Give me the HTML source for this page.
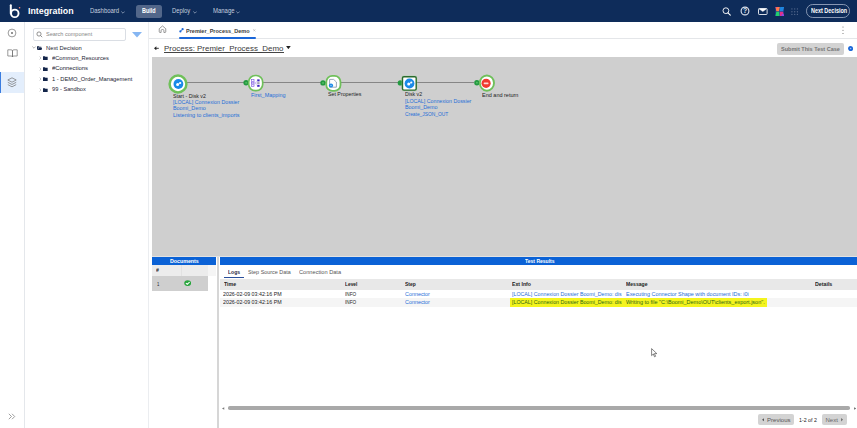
<!DOCTYPE html>
<html><head><meta charset="utf-8">
<style>
*{box-sizing:border-box;margin:0;padding:0}
html,body{width:857px;height:428px;overflow:hidden;background:#fff;font-family:"Liberation Sans",sans-serif;color:#222}
.abs{position:absolute}
.tx{position:absolute;white-space:nowrap;transform-origin:0 50%}
</style></head><body>

<!-- NAV -->
<div class="abs" style="left:0;top:0;width:857px;height:21.5px;background:#0e2c5a"></div>
<svg class="abs" style="left:9px;top:3px" width="13" height="16" viewBox="0 0 13 16">
  <path d="M1.8 2.2 V10.5" stroke="#fff" stroke-width="2" fill="none" stroke-linecap="round"/>
  <circle cx="5.8" cy="10.4" r="3.75" stroke="#fff" stroke-width="1.9" fill="none"/>
  <circle cx="10.6" cy="4.7" r="0.8" fill="#ff8a7a"/>
</svg>
<div class="abs" style="left:135.5px;top:4.6px;width:26px;height:13.2px;border-radius:2.5px;background:#52678a"></div>
<!-- nav chevrons -->
<svg class="abs" style="left:121px;top:10.5px" width="4" height="3" viewBox="0 0 4 3"><path d="M0.3 0.5 L2 2.2 L3.7 0.5" stroke="#c5cfdf" stroke-width="0.6" fill="none"/></svg>
<svg class="abs" style="left:192.8px;top:10.5px" width="4" height="3" viewBox="0 0 4 3"><path d="M0.3 0.5 L2 2.2 L3.7 0.5" stroke="#c5cfdf" stroke-width="0.6" fill="none"/></svg>
<svg class="abs" style="left:236.2px;top:10.5px" width="4" height="3" viewBox="0 0 4 3"><path d="M0.3 0.5 L2 2.2 L3.7 0.5" stroke="#c5cfdf" stroke-width="0.6" fill="none"/></svg>
<!-- right icons -->
<svg class="abs" style="left:721px;top:6px" width="11" height="11" viewBox="0 0 11 11"><circle cx="4.9" cy="4.7" r="2.9" stroke="#fff" stroke-width="0.9" fill="none"/><path d="M7 6.9 L9.3 9.2" stroke="#fff" stroke-width="1.1" stroke-linecap="round"/></svg>
<svg class="abs" style="left:739.6px;top:6px" width="10" height="10" viewBox="0 0 10 10"><circle cx="5" cy="5" r="3.9" stroke="#dfe5ef" stroke-width="1.1" fill="none"/><text x="5" y="7.4" font-size="6.8" fill="#dfe5ef" text-anchor="middle" font-family="Liberation Sans" font-weight="bold">?</text></svg>
<svg class="abs" style="left:757.5px;top:7.8px" width="10" height="7" viewBox="0 0 10 7"><rect x="0.5" y="0.5" width="8.6" height="6" rx="0.8" stroke="#fff" stroke-width="0.85" fill="none"/><path d="M1.2 1 L4.8 3.6 L8.4 1Z" fill="#fff" stroke="#fff" stroke-width="0.4"/></svg>
<svg class="abs" style="left:774.5px;top:6.9px" width="9.6" height="9.2" viewBox="0 0 10 10"><rect width="10" height="10" fill="#1c3f8a"/><path d="M0.3 0 H5 L4.2 4.6 H1.2Z" fill="#ff7a4a"/><path d="M0.3 0 H2 L1.5 1.5Z" fill="#f0409a"/><path d="M5.4 0 H9.7 L8.6 4.6 H4.8Z" fill="#1f86e0"/><path d="M1.2 5.2 H4.4 L4.8 10 H0.2Z" fill="#1fd06e"/><path d="M5 5.2 H8.4 L9.6 10 H5.2Z" fill="#e0308a"/><path d="M7.4 7.5 L9 7.5 L9.6 10 H6.6Z" fill="#8a4ae8"/></svg>
<svg class="abs" style="left:791px;top:7.6px" width="7.4" height="7.4" viewBox="0 0 8 8" fill="#50658a"><circle cx="1" cy="1" r="0.75"/><circle cx="4" cy="1" r="0.75"/><circle cx="7" cy="1" r="0.75"/><circle cx="1" cy="4" r="0.75"/><circle cx="4" cy="4" r="0.75"/><circle cx="7" cy="4" r="0.75"/><circle cx="1" cy="7" r="0.75"/><circle cx="4" cy="7" r="0.75"/><circle cx="7" cy="7" r="0.75"/></svg>
<div class="abs" style="left:806.4px;top:4.3px;width:43.4px;height:13.6px;border:0.8px solid #8797b3;border-radius:6.8px"></div>

<!-- RAIL -->
<div class="abs" style="left:24px;top:21.5px;width:1px;height:407px;background:#e4e7eb"></div>
<svg class="abs" style="left:7px;top:27.5px" width="10" height="10" viewBox="0 0 10 10"><circle cx="5" cy="5" r="3.9" stroke="#707070" stroke-width="0.7" fill="none"/><circle cx="5" cy="5" r="1" fill="#707070"/></svg>
<svg class="abs" style="left:6.5px;top:48.6px" width="11" height="9" viewBox="0 0 11 9"><path d="M0.8 0.8 H4.2 Q5.5 0.8 5.5 2 V8 Q5.5 7 4.2 7 H0.8Z M10.2 0.8 H6.8 Q5.5 0.8 5.5 2 V8 Q5.5 7 6.8 7 H10.2Z" stroke="#707070" stroke-width="0.7" fill="none" stroke-linejoin="round"/></svg>
<div class="abs" style="left:0;top:72px;width:24px;height:20.5px;background:#e3eefc"></div>
<div class="abs" style="left:0;top:72px;width:1px;height:20.5px;background:#3b7de0"></div>
<svg class="abs" style="left:7px;top:77px" width="10" height="11" viewBox="0 0 10 11"><path d="M5 0.8 L9.2 3 L5 5.2 L0.8 3Z" stroke="#707070" stroke-width="0.7" fill="none" stroke-linejoin="round"/><path d="M0.8 5.3 L5 7.5 L9.2 5.3 M0.8 7.6 L5 9.8 L9.2 7.6" stroke="#707070" stroke-width="0.7" fill="none" stroke-linejoin="round"/></svg>
<svg class="abs" style="left:8px;top:413px" width="8" height="7" viewBox="0 0 8 7"><path d="M0.8 0.8 L3.5 3.5 L0.8 6.2 M4 0.8 L6.7 3.5 L4 6.2" stroke="#777" stroke-width="0.7" fill="none"/></svg>

<!-- TREE -->
<div class="abs" style="left:148.2px;top:21.5px;width:1px;height:407px;background:#ebedf0"></div>
<div class="abs" style="left:32.5px;top:28px;width:93px;height:12.6px;border:0.8px solid #dadee4;border-radius:2px"></div>
<svg class="abs" style="left:36px;top:31px" width="7" height="7" viewBox="0 0 7 7"><circle cx="3" cy="3" r="2.1" stroke="#666" stroke-width="0.7" fill="none"/><path d="M4.6 4.6 L6.2 6.2" stroke="#666" stroke-width="0.7"/></svg>
<svg class="abs" style="left:132px;top:32px" width="10" height="5.5" viewBox="0 0 10 5.5"><path d="M0 0 H10 L5 5.5Z" fill="#86b6f2"/></svg>

<svg class="abs" style="left:31.8px;top:46.4px" width="4" height="3" viewBox="0 0 4 3"><path d="M0.3 0.5 L2 2.2 L3.7 0.5" stroke="#777" stroke-width="0.55" fill="none"/></svg>
<svg class="abs" style="left:37.3px;top:45.8px" width="5.2" height="4.3" viewBox="0 0 6 5"><path d="M0 0.3 H2.2 L2.8 1 H5 V1.6 H1.4 L0.6 4.6 H0Z M1.8 2 H6 L5.2 4.8 H0.9Z" fill="#13254a"/></svg>

<svg class="abs" style="left:38.6px;top:56.2px" width="3" height="4" viewBox="0 0 3 4"><path d="M0.6 0.6 L2 2 L0.6 3.4" stroke="#8a8a8a" stroke-width="0.5" fill="none"/></svg>
<svg class="abs" style="left:43.4px;top:56.2px" width="5" height="4.2" viewBox="0 0 6 5"><path d="M0 0.3 H2.2 L2.9 1 H5.6 V4.8 H0Z" fill="#13254a"/></svg>
<svg class="abs" style="left:38.6px;top:66.7px" width="3" height="4" viewBox="0 0 3 4"><path d="M0.6 0.6 L2 2 L0.6 3.4" stroke="#8a8a8a" stroke-width="0.5" fill="none"/></svg>
<svg class="abs" style="left:43.4px;top:66.6px" width="5" height="4.2" viewBox="0 0 6 5"><path d="M0 0.3 H2.2 L2.9 1 H5.6 V4.8 H0Z" fill="#13254a"/></svg>
<svg class="abs" style="left:38.6px;top:77.2px" width="3" height="4" viewBox="0 0 3 4"><path d="M0.6 0.6 L2 2 L0.6 3.4" stroke="#8a8a8a" stroke-width="0.5" fill="none"/></svg>
<svg class="abs" style="left:43.4px;top:77px" width="5" height="4.2" viewBox="0 0 6 5"><path d="M0 0.3 H2.2 L2.9 1 H5.6 V4.8 H0Z" fill="#13254a"/></svg>
<svg class="abs" style="left:38.6px;top:87.7px" width="3" height="4" viewBox="0 0 3 4"><path d="M0.6 0.6 L2 2 L0.6 3.4" stroke="#8a8a8a" stroke-width="0.5" fill="none"/></svg>
<svg class="abs" style="left:43.4px;top:87.5px" width="5" height="4.2" viewBox="0 0 6 5"><path d="M0 0.3 H2.2 L2.9 1 H5.6 V4.8 H0Z" fill="#13254a"/></svg>

<!-- MAIN: tab row -->
<div class="abs" style="left:149.3px;top:38.3px;width:708px;height:0.9px;background:#e4e6e9"></div>
<svg class="abs" style="left:157.5px;top:25.4px" width="9" height="8.4" viewBox="0 0 9 9"><path d="M1 4 L4.5 1 L8 4 V7.2 Q8 8 7.2 8 H6 V6 Q6 4.8 4.5 4.8 Q3 4.8 3 6 V8 H1.8 Q1 8 1 7.2Z" stroke="#666" stroke-width="0.7" fill="none" stroke-linejoin="round"/></svg>
<svg class="abs" style="left:178.8px;top:28.2px" width="5" height="4.6" viewBox="0 0 5 5"><circle cx="1.3" cy="3.7" r="1.2" fill="#1a66d8"/><circle cx="3.7" cy="1.3" r="1.2" fill="#1a66d8"/><path d="M1.3 3.7 L3.7 1.3" stroke="#1a66d8" stroke-width="0.9"/></svg>
<svg class="abs" style="left:253.2px;top:29px" width="2.6" height="2.6" viewBox="0 0 3 3"><path d="M0.2 0.2 L2.8 2.8 M2.8 0.2 L0.2 2.8" stroke="#999" stroke-width="0.5"/></svg>
<div class="abs" style="left:178.9px;top:36.9px;width:77px;height:1.8px;background:#1a66d8;border-radius:1px"></div>
<svg class="abs" style="left:842.3px;top:25.7px" width="2" height="9" viewBox="0 0 2 9" fill="#555"><circle cx="1" cy="1" r="0.52"/><circle cx="1" cy="4.3" r="0.52"/><circle cx="1" cy="7.6" r="0.52"/></svg>

<!-- title row -->
<svg class="abs" style="left:153.6px;top:45.5px" width="5" height="4.6" viewBox="0 0 5 4.6"><path d="M0 2.3 L2.4 0.2 V4.4Z" fill="#222"/><path d="M2 2.3 H4.8" stroke="#222" stroke-width="0.9"/></svg>
<div class="abs" style="left:164.4px;top:51.9px;width:119.5px;height:0.8px;background:#444"></div>
<svg class="abs" style="left:285.8px;top:46.1px" width="4.8" height="3.2" viewBox="0 0 5 3.4"><path d="M0 0 H5 L2.5 3.4Z" fill="#222"/></svg>
<div class="abs" style="left:777px;top:43px;width:67px;height:12.3px;background:#d3d3d3;border-radius:2px"></div>
<svg class="abs" style="left:847.6px;top:46.2px" width="5.2" height="5.2" viewBox="0 0 6 6"><circle cx="3" cy="3" r="2.9" fill="#1a66d8"/><circle cx="3" cy="3" r="0.9" fill="#9cc2f5"/></svg>

<!-- CANVAS -->
<div class="abs" style="left:152px;top:57px;width:705px;height:198.5px;background:#cfcfcf"></div>
<div class="abs" style="left:180px;top:82.3px;width:294px;height:1.15px;background:#868686"></div>

<!-- start node -->
<svg class="abs" style="left:167.1px;top:72.5px" width="22" height="22" viewBox="0 0 22 22"><circle cx="11" cy="11" r="8.4" fill="#fff" stroke="#6fc05a" stroke-width="2.5"/><circle cx="11.4" cy="11" r="4.9" fill="#1a8ae8"/><circle cx="10.6" cy="11.6" r="1.5" fill="#fff"/><circle cx="13.2" cy="10" r="1.1" fill="#fff"/><path d="M10.6 11.6 L13.2 10" stroke="#fff" stroke-width="0.7"/></svg>
<!-- map node -->
<svg class="abs" style="left:243px;top:73px" width="22" height="20" viewBox="0 0 22 20"><circle cx="3.1" cy="9.8" r="2.7" fill="#239a40"/><circle cx="3.1" cy="9.8" r="0.9" fill="#5cc06a"/><rect x="5.7" y="2.5" width="14" height="15.2" rx="6.5" fill="#fff" stroke="#6fc05a" stroke-width="1.7"/><g fill="#fff" stroke="#7a55e0" stroke-width="0.6"><rect x="8.6" y="6.6" width="2.4" height="1.7"/><rect x="8.6" y="9.2" width="2.4" height="1.7"/><rect x="8.6" y="11.8" width="2.4" height="1.7"/></g><rect x="14.2" y="6.4" width="2.4" height="2" fill="#3a22c0"/><rect x="14.2" y="9.3" width="2.4" height="1.5" fill="#8a8a9a"/><rect x="14.2" y="11.8" width="2.4" height="2" fill="#3a22c0"/><path d="M11 7.4 L14.2 12.8 M11 12.6 L14.2 7.4 M11 10 H14.2" stroke="#a78bea" stroke-width="0.35" fill="none"/></svg>
<!-- set props node -->
<svg class="abs" style="left:320px;top:73px" width="22" height="20" viewBox="0 0 22 20"><circle cx="3" cy="9.9" r="2.7" fill="#239a40"/><circle cx="3" cy="9.9" r="0.9" fill="#5cc06a"/><rect x="6.3" y="2.9" width="14.2" height="15" rx="6" fill="#fff" stroke="#6fc05a" stroke-width="1.8"/><path d="M9.6 6.4 H13.6 L16.4 9 V14.2 H9.6Z" fill="#fff" stroke="#8392a6" stroke-width="0.8" stroke-linejoin="round"/><circle cx="11" cy="12.5" r="2.1" fill="#1a8ae8"/><circle cx="11" cy="12.5" r="0.7" fill="#9fd0ff"/></svg>
<!-- disk node -->
<svg class="abs" style="left:397px;top:73px" width="21" height="20" viewBox="0 0 21 20"><circle cx="3.3" cy="9.9" r="2.6" fill="#239a40"/><rect x="4.4" y="2.6" width="15.9" height="15.6" rx="2.4" fill="#a9d69c" opacity="0.55"/><rect x="5.5" y="3.7" width="13.7" height="13.4" rx="1.4" fill="#fff" stroke="#2a6b2f" stroke-width="1.4"/><circle cx="12.5" cy="10.5" r="4.9" fill="#1a8ae8"/><circle cx="11.7" cy="11.1" r="1.5" fill="#fff"/><circle cx="14.3" cy="9.5" r="1.1" fill="#fff"/><path d="M11.7 11.1 L14.3 9.5" stroke="#fff" stroke-width="0.7"/></svg>
<!-- end node -->
<svg class="abs" style="left:474.1px;top:73.3px" width="23" height="20" viewBox="0 0 23 20"><circle cx="2.9" cy="9.7" r="2.7" fill="#239a40"/><circle cx="2.9" cy="9.7" r="0.9" fill="#5cc06a"/><ellipse cx="12.9" cy="10.1" rx="7.1" ry="7.6" fill="#fff" stroke="#6fc05a" stroke-width="1.9"/><circle cx="12.1" cy="10.3" r="4.6" fill="#f03a2e"/><rect x="9.7" y="9.5" width="4.8" height="1.7" rx="0.6" fill="#ffd9d2"/></svg>

<!-- BOTTOM -->
<div class="abs" style="left:152px;top:255.5px;width:705px;height:1.5px;background:#e2e2e2"></div>
<div class="abs" style="left:151.8px;top:256.9px;width:64.6px;height:8.2px;background:#0b62d6"></div>
<div class="abs" style="left:216.5px;top:256.9px;width:2.8px;height:172px;background:#d6d6d6"></div>
<div class="abs" style="left:220px;top:256.9px;width:637px;height:8.2px;background:#0b62d6"></div>

<!-- documents table -->
<div class="abs" style="left:151.8px;top:265.4px;width:56.2px;height:10.6px;background:#ececec"></div>
<div class="abs" style="left:208.3px;top:265.3px;width:8px;height:10.5px;background:#f5f5f5"></div>
<div class="abs" style="left:181px;top:265.3px;width:0.6px;height:10.5px;background:#e2e2e2"></div>
<div class="abs" style="left:151.8px;top:276px;width:56.2px;height:14.6px;background:#cfcfcf"></div>
<svg class="abs" style="left:184.1px;top:280.1px" width="7.4" height="6.2" viewBox="0 0 7 7" preserveAspectRatio="none"><circle cx="3.5" cy="3.5" r="3.3" fill="#2aa63e"/><path d="M1.8 3.6 L3.1 4.8 L5.3 2.3" stroke="#fff" stroke-width="1.1" fill="none"/></svg>

<!-- tabs underline -->
<div class="abs" style="left:224.3px;top:276.7px;width:20px;height:1.2px;background:#2a4f9c"></div>

<!-- log table -->
<div class="abs" style="left:220px;top:278.5px;width:637px;height:11px;background:#e8e8e8"></div>
<div class="abs" style="left:220px;top:298.2px;width:637px;height:8.6px;background:#f5f5f5"></div>
<div class="abs" style="left:509.7px;top:298.2px;width:257px;height:8.6px;background:#f4f41e"></div>

<!-- cursor -->
<svg class="abs" style="left:650.8px;top:347.6px" width="7" height="10" viewBox="0 0 7 10"><path d="M0.6 0.6 V7.6 L2.3 6 L3.5 8.8 L4.6 8.3 L3.4 5.6 H5.8Z" fill="#fff" stroke="#333" stroke-width="0.6" stroke-linejoin="round"/></svg>

<!-- scrollbar -->
<div class="abs" style="left:228px;top:406.2px;width:621.7px;height:3.6px;background:#a9a9a9;border-radius:1.8px"></div>
<svg class="abs" style="left:222.3px;top:406.6px" width="2.6" height="3" viewBox="0 0 3 3"><path d="M0 1.5 L2.6 0 V3Z" fill="#777"/></svg>
<svg class="abs" style="left:853.8px;top:406.6px" width="2.6" height="3" viewBox="0 0 3 3"><path d="M2.6 1.5 L0 0 V3Z" fill="#777"/></svg>

<!-- pager -->
<div class="abs" style="left:758.3px;top:414.2px;width:35.4px;height:11.2px;background:#d3d3d3;border-radius:2px"></div>
<div class="abs" style="left:821.5px;top:414.2px;width:25px;height:11.2px;background:#d3d3d3;border-radius:2px"></div>
<svg class="abs" style="left:762px;top:418.2px" width="2.2" height="3.4" viewBox="0 0 2.2 3.4"><path d="M0 1.7 L2.2 0 V3.4Z" fill="#555"/></svg>
<svg class="abs" style="left:841.2px;top:418.2px" width="2.2" height="3.4" viewBox="0 0 2.2 3.4"><path d="M2.2 1.7 L0 0 V3.4Z" fill="#777"/></svg>

<div class="tx" style="left:27.80px;top:5.92px;font-size:9.00px;line-height:10.80px;font-weight:bold;color:#fff;transform:scaleX(0.979);">Integration</div>
<div class="tx" style="left:89.70px;top:7.28px;font-size:6.40px;line-height:7.68px;font-weight:normal;color:#c5cfdf;transform:scaleX(0.933);">Dashboard</div>
<div class="tx" style="left:141.50px;top:7.28px;font-size:6.40px;line-height:7.68px;font-weight:bold;color:#fff;transform:scaleX(0.856);">Build</div>
<div class="tx" style="left:172.40px;top:7.28px;font-size:6.40px;line-height:7.68px;font-weight:normal;color:#c5cfdf;transform:scaleX(0.919);">Deploy</div>
<div class="tx" style="left:213.20px;top:7.28px;font-size:6.40px;line-height:7.68px;font-weight:normal;color:#c5cfdf;transform:scaleX(0.934);">Manage</div>
<div class="tx" style="left:810.70px;top:7.38px;font-size:6.40px;line-height:7.68px;font-weight:bold;color:#fff;transform:scaleX(0.855);">Next Decision</div>
<div class="tx" style="left:45.80px;top:31.12px;font-size:5.80px;line-height:6.96px;font-weight:normal;color:#858585;transform:scaleX(0.949);">Search component</div>
<div class="tx" style="left:45.60px;top:44.58px;font-size:5.70px;line-height:6.84px;font-weight:normal;color:#1b2333;transform:scaleX(1.021);">Next Decision</div>
<div class="tx" style="left:52.00px;top:54.78px;font-size:5.70px;line-height:6.84px;font-weight:normal;color:#1b2333;transform:scaleX(1.005);">#Common_Resources</div>
<div class="tx" style="left:52.00px;top:65.18px;font-size:5.70px;line-height:6.84px;font-weight:normal;color:#1b2333;transform:scaleX(1.033);">#Connections</div>
<div class="tx" style="left:52.00px;top:75.58px;font-size:5.70px;line-height:6.84px;font-weight:normal;color:#1b2333;transform:scaleX(1.012);">1 - DEMO_Order_Management</div>
<div class="tx" style="left:52.00px;top:86.08px;font-size:5.70px;line-height:6.84px;font-weight:normal;color:#1b2333;">99 - Sandbox</div>
<div class="tx" style="left:185.80px;top:26.85px;font-size:6.10px;line-height:7.32px;font-weight:bold;color:#3a3a3a;transform:scaleX(0.906);">Premier_Process_Demo</div>
<div class="tx" style="left:164.40px;top:44.31px;font-size:7.60px;line-height:9.12px;font-weight:normal;color:#383838;transform:scaleX(1.044);">Process: Premier_Process_Demo</div>
<div class="tx" style="left:781.00px;top:45.25px;font-size:6.10px;line-height:7.32px;font-weight:bold;color:#747474;transform:scaleX(0.908);">Submit This Test Case</div>
<div class="tx" style="left:173.40px;top:92.72px;font-size:5.80px;line-height:6.96px;font-weight:normal;color:#222;transform:scaleX(0.903);">Start - Disk v2</div>
<div class="tx" style="left:173.30px;top:99.02px;font-size:5.80px;line-height:6.96px;font-weight:normal;color:#1e6ed8;transform:scaleX(0.910);">[LOCAL] Connexion Dossier</div>
<div class="tx" style="left:173.30px;top:105.22px;font-size:5.80px;line-height:6.96px;font-weight:normal;color:#1e6ed8;transform:scaleX(0.931);">Boomi_Demo</div>
<div class="tx" style="left:173.30px;top:111.52px;font-size:5.80px;line-height:6.96px;font-weight:normal;color:#1e6ed8;transform:scaleX(0.953);">Listening to clients_imports</div>
<div class="tx" style="left:250.60px;top:91.52px;font-size:5.80px;line-height:6.96px;font-weight:normal;color:#1e6ed8;transform:scaleX(0.942);">First_Mapping</div>
<div class="tx" style="left:327.90px;top:91.32px;font-size:5.80px;line-height:6.96px;font-weight:normal;color:#222;transform:scaleX(0.909);">Set Properties</div>
<div class="tx" style="left:404.90px;top:91.32px;font-size:5.80px;line-height:6.96px;font-weight:normal;color:#222;transform:scaleX(0.899);">Disk v2</div>
<div class="tx" style="left:404.90px;top:97.92px;font-size:5.80px;line-height:6.96px;font-weight:normal;color:#1e6ed8;transform:scaleX(0.911);">[LOCAL] Connexion Dossier</div>
<div class="tx" style="left:404.90px;top:104.12px;font-size:5.80px;line-height:6.96px;font-weight:normal;color:#1e6ed8;transform:scaleX(0.928);">Boomi_Demo</div>
<div class="tx" style="left:404.90px;top:110.52px;font-size:5.80px;line-height:6.96px;font-weight:normal;color:#1e6ed8;transform:scaleX(0.838);">Create_JSON_OUT</div>
<div class="tx" style="left:482.20px;top:91.52px;font-size:5.80px;line-height:6.96px;font-weight:normal;color:#222;transform:scaleX(0.949);">End and return</div>
<div class="tx" style="left:170.00px;top:257.82px;font-size:5.80px;line-height:6.96px;font-weight:bold;color:#fff;transform:scaleX(0.912);">Documents</div>
<div class="tx" style="left:524.50px;top:257.82px;font-size:5.80px;line-height:6.96px;font-weight:bold;color:#fff;transform:scaleX(0.869);">Test Results</div>
<div class="tx" style="left:156.00px;top:267.02px;font-size:5.80px;line-height:6.96px;font-weight:bold;color:#222;transform:scaleX(0.899);">#</div>
<div class="tx" style="left:156.60px;top:280.72px;font-size:5.80px;line-height:6.96px;font-weight:normal;color:#222;transform:scaleX(0.713);">1</div>
<div class="tx" style="left:227.70px;top:269.32px;font-size:5.80px;line-height:6.96px;font-weight:bold;color:#1f2a44;transform:scaleX(0.873);">Logs</div>
<div class="tx" style="left:248.00px;top:269.32px;font-size:5.80px;line-height:6.96px;font-weight:normal;color:#555;transform:scaleX(0.933);">Step Source Data</div>
<div class="tx" style="left:299.30px;top:269.32px;font-size:5.80px;line-height:6.96px;font-weight:normal;color:#555;transform:scaleX(0.974);">Connection Data</div>
<div class="tx" style="left:223.50px;top:281.02px;font-size:5.80px;line-height:6.96px;font-weight:bold;color:#222;transform:scaleX(0.901);">Time</div>
<div class="tx" style="left:345.30px;top:281.02px;font-size:5.80px;line-height:6.96px;font-weight:bold;color:#222;transform:scaleX(0.836);">Level</div>
<div class="tx" style="left:405.40px;top:281.02px;font-size:5.80px;line-height:6.96px;font-weight:bold;color:#222;transform:scaleX(0.859);">Step</div>
<div class="tx" style="left:512.10px;top:281.02px;font-size:5.80px;line-height:6.96px;font-weight:bold;color:#222;transform:scaleX(0.893);">Ext Info</div>
<div class="tx" style="left:626.00px;top:281.02px;font-size:5.80px;line-height:6.96px;font-weight:bold;color:#222;transform:scaleX(0.877);">Message</div>
<div class="tx" style="left:815.20px;top:281.02px;font-size:5.80px;line-height:6.96px;font-weight:bold;color:#222;transform:scaleX(0.910);">Details</div>
<div class="tx" style="left:222.90px;top:290.52px;font-size:5.80px;line-height:6.96px;font-weight:normal;color:#222;transform:scaleX(0.915);">2026-02-09 03:42:16 PM</div>
<div class="tx" style="left:345.30px;top:290.52px;font-size:5.80px;line-height:6.96px;font-weight:normal;color:#222;transform:scaleX(0.808);">INFO</div>
<div class="tx" style="left:405.40px;top:290.52px;font-size:5.80px;line-height:6.96px;font-weight:normal;color:#1e6ed8;transform:scaleX(0.930);">Connector</div>
<div class="tx" style="left:512.10px;top:290.52px;font-size:5.80px;line-height:6.96px;font-weight:normal;color:#1e6ed8;transform:scaleX(0.912);">[LOCAL] Connexion Dossier Boomi_Demo: dis</div>
<div class="tx" style="left:222.90px;top:299.22px;font-size:5.80px;line-height:6.96px;font-weight:normal;color:#222;transform:scaleX(0.915);">2026-02-09 03:42:16 PM</div>
<div class="tx" style="left:345.30px;top:299.22px;font-size:5.80px;line-height:6.96px;font-weight:normal;color:#222;transform:scaleX(0.808);">INFO</div>
<div class="tx" style="left:405.40px;top:299.22px;font-size:5.80px;line-height:6.96px;font-weight:normal;color:#1e6ed8;transform:scaleX(0.930);">Connector</div>
<div class="tx" style="left:512.10px;top:299.22px;font-size:5.80px;line-height:6.96px;font-weight:normal;color:#2a6614;transform:scaleX(0.912);">[LOCAL] Connexion Dossier Boomi_Demo: dis</div>
<div class="tx" style="left:626.00px;top:290.52px;font-size:5.80px;line-height:6.96px;font-weight:normal;color:#1e6ed8;transform:scaleX(0.940);">Executing Connector Shape with document IDs: i0i</div>
<div class="tx" style="left:626.00px;top:299.22px;font-size:5.80px;line-height:6.96px;font-weight:normal;color:#2a6614;transform:scaleX(0.945);">Writing to file &quot;C:\Boomi_Demo\OUT\clients_export.json&quot;.</div>
<div class="tx" style="left:766.70px;top:416.51px;font-size:6.00px;line-height:7.20px;font-weight:normal;color:#555;transform:scaleX(1.007);">Previous</div>
<div class="tx" style="left:798.90px;top:416.51px;font-size:6.00px;line-height:7.20px;font-weight:normal;color:#222;transform:scaleX(0.880);">1-2 of 2</div>
<div class="tx" style="left:825.50px;top:416.51px;font-size:6.00px;line-height:7.20px;font-weight:normal;color:#666;">Next</div>

</body></html>
